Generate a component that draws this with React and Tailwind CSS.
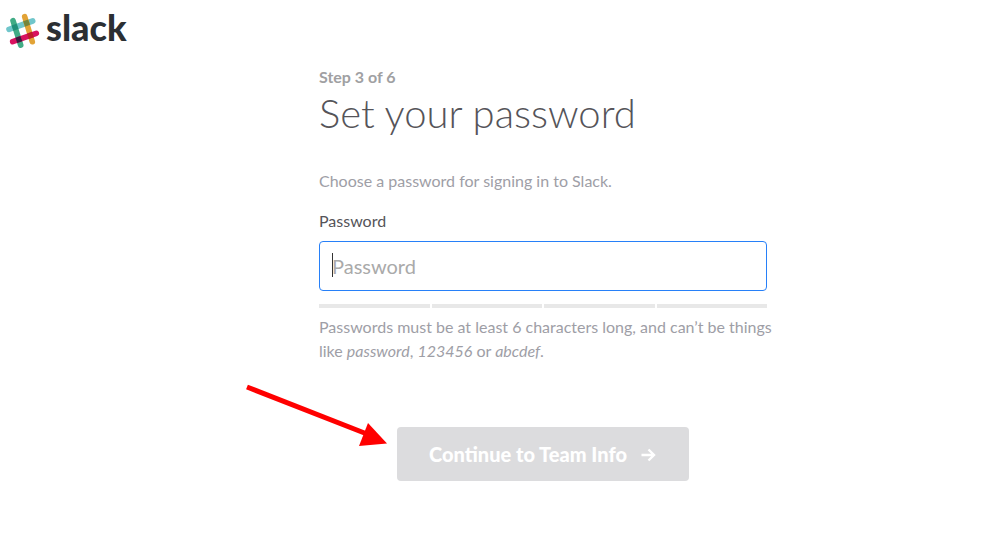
import { useState } from "react";

function SlackMark() {
  return (
    <svg className="h-9 w-9" viewBox="0 0 36 36" fill="none" strokeWidth="5.6" aria-hidden="true">
      <g strokeLinecap="round">
        <path d="M5 17.3 28.7 9" stroke="#70c6cb" />
        <path d="M20.7 4.7 28.3 29.7" stroke="#e2a336" />
        <path d="M9 8.7 16.7 33.2" stroke="#41ac86" />
        <path d="M8.7 29.7 32.3 21.3" stroke="#d8125f" />
      </g>
      <path d="M8.5 16.1 13.5 14.3" stroke="#218f78" />
      <path d="M20.1 12 25.1 10.2" stroke="#74853d" />
      <path d="M12.3 28.4 17.3 26.6" stroke="#3c1d40" />
      <path d="M23.9 24.3 28.9 22.5" stroke="#bf1e2a" />
    </svg>
  );
}

function StrengthMeter() {
  return (
    <div className="mt-[13px] grid grid-cols-4 gap-0.5" aria-hidden="true">
      <span className="h-1 bg-[#e8e8e8]" />
      <span className="h-1 bg-[#e8e8e8]" />
      <span className="h-1 bg-[#e8e8e8]" />
      <span className="h-1 bg-[#e8e8e8]" />
    </div>
  );
}

export default function App() {
  const [password, setPassword] = useState("");

  return (
    <div className="min-h-screen bg-white font-[Lato,sans-serif] text-base leading-6 text-[#9e9ea6] antialiased">
      <header className="px-1 pt-3">
        <a href="#home" className="flex h-10 w-fit items-start text-[#2b2f33]">
          <SlackMark />
          <span className="ml-1.5 text-4xl leading-[30px] font-black">slack</span>
        </a>
      </header>

      <main className="pb-12 pl-20">
        <form className="mx-auto max-w-md pt-[13px]" onSubmit={(e) => e.preventDefault()}>
          <p className="font-bold text-[#a0a0a2]">Step 3 of 6</p>
          <h1 className="text-[40px] leading-12 font-light whitespace-nowrap text-[#555459]">
            Set your password
          </h1>
          <p className="mt-8">Choose a password for signing in to Slack.</p>

          <label htmlFor="password" className="mt-4 block text-[#555459]">
            Password
          </label>
          <div className="relative mt-2">
            <input
              id="password"
              type="password"
              placeholder="Password"
              value={password}
              onChange={(e) => setPassword(e.target.value)}
              className="block h-[50px] w-full rounded border border-[#2780f8] px-3 text-xl text-[#555459] caret-transparent outline-none placeholder:text-[#aaaaaa]"
            />
            <span className="absolute top-3 left-[13px] h-6 w-px bg-[#333333]" />
          </div>
          <StrengthMeter />
          <p className="mt-[7px] -mr-4">
            Passwords must be at least 6 characters long, and can’t be things like <em>password</em>,{" "}
            <em>123456</em> or <em>abcdef</em>.
          </p>

          <div className="relative mt-16 flex justify-center">
            <svg className="absolute -top-11 -left-20 h-20 w-40" viewBox="0 0 160 80" aria-hidden="true">
              <path d="M8 4 128 51" stroke="#ff0000" strokeWidth="5" />
              <path d="M129 40 148 60.5 120 63Z" fill="#ff0000" />
            </svg>
            <button
              type="submit"
              className="flex h-[54px] items-center gap-3.5 rounded bg-[#dcdcde] px-8 text-xl font-black text-white"
            >
              Continue to Team Info
              <svg className="h-4 w-4" viewBox="0 0 16 16" fill="none" stroke="currentColor" strokeWidth="2.4" aria-hidden="true">
                <path d="M0.5 9H12.5M7.5 3.5 13 9l-5.5 5.5" />
              </svg>
            </button>
          </div>
        </form>
      </main>
    </div>
  );
}
